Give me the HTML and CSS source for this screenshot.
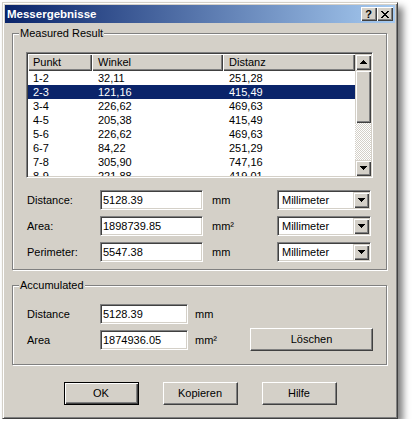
FILE: index.html
```html
<!DOCTYPE html>
<html>
<head>
<meta charset="utf-8">
<link rel="stylesheet" href="styles.css">
</head>
<body>
<div class="dialog">
  <div class="titlebar">
    <span class="title">Messergebnisse</span>
    <div class="cbtns">
      <span class="cbtn help">?</span>
      <span class="cbtn close"><svg width="8" height="7" viewBox="0 0 8 7"><path d="M0 0h2v1h1v1h2v-1h1v-1h2v1h-1v1h-1v1h-1v1h1v1h1v1h1v1h-2v-1h-1v-1h-2v1h-1v1h-2v-1h1v-1h1v-1h1v-1h-1v-1h-1v-1h-1z" fill="#000"/></svg></span>
    </div>
  </div>
  <div class="content">
    <div class="group g1">
      <span class="legend">Measured Result</span>
      <div class="list">
        <div class="list-main">
          <div class="lv-header">
            <div class="hcell c1">Punkt</div>
            <div class="hcell c2">Winkel</div>
            <div class="hcell c3">Distanz</div>
          </div>
          <div class="lv-rows">
            <div class="row"><span class="c1">1-2</span><span class="c2">32,11</span><span class="c3">251,28</span></div>
            <div class="row sel"><span class="c1">2-3</span><span class="c2">121,16</span><span class="c3">415,49</span></div>
            <div class="row"><span class="c1">3-4</span><span class="c2">226,62</span><span class="c3">469,63</span></div>
            <div class="row"><span class="c1">4-5</span><span class="c2">205,38</span><span class="c3">415,49</span></div>
            <div class="row"><span class="c1">5-6</span><span class="c2">226,62</span><span class="c3">469,63</span></div>
            <div class="row"><span class="c1">6-7</span><span class="c2">84,22</span><span class="c3">251,29</span></div>
            <div class="row"><span class="c1">7-8</span><span class="c2">305,90</span><span class="c3">747,16</span></div>
            <div class="row"><span class="c1">8-9</span><span class="c2">221,88</span><span class="c3">419,01</span></div>
          </div>
        </div>
        <div class="vscroll">
          <div class="sbtn"><svg width="7" height="4" viewBox="0 0 7 4"><path d="M3 0h1v1H3zM2 1h3v1H2zM1 2h5v1H1zM0 3h7v1H0z" fill="#000"/></svg></div>
          <div class="thumb"></div>
          <div class="track"></div>
          <div class="sbtn"><svg width="7" height="4" viewBox="0 0 7 4"><path d="M0 0h7v1H0zM1 1h5v1H1zM2 2h3v1H2zM3 3h1v1H3z" fill="#000"/></svg></div>
        </div>
      </div>
      <div class="fields">
        <div class="frow">
          <span class="lbl">Distance:</span>
          <span class="edit e1">5128.39</span>
          <span class="unit u1">mm</span>
          <span class="combo"><span class="ctext">Millimeter</span><span class="dbtn"><svg width="7" height="4" viewBox="0 0 7 4"><path d="M0 0h7v1H0zM1 1h5v1H1zM2 2h3v1H2zM3 3h1v1H3z" fill="#000"/></svg></span></span>
        </div>
        <div class="frow">
          <span class="lbl">Area:</span>
          <span class="edit e1">1898739.85</span>
          <span class="unit u1">mm²</span>
          <span class="combo"><span class="ctext">Millimeter</span><span class="dbtn"><svg width="7" height="4" viewBox="0 0 7 4"><path d="M0 0h7v1H0zM1 1h5v1H1zM2 2h3v1H2zM3 3h1v1H3z" fill="#000"/></svg></span></span>
        </div>
        <div class="frow">
          <span class="lbl">Perimeter:</span>
          <span class="edit e1">5547.38</span>
          <span class="unit u1">mm</span>
          <span class="combo"><span class="ctext">Millimeter</span><span class="dbtn"><svg width="7" height="4" viewBox="0 0 7 4"><path d="M0 0h7v1H0zM1 1h5v1H1zM2 2h3v1H2zM3 3h1v1H3z" fill="#000"/></svg></span></span>
        </div>
      </div>
    </div>
    <div class="group g2">
      <span class="legend">Accumulated</span>
      <div class="frow r1">
        <span class="lbl">Distance</span>
        <span class="edit e2">5128.39</span>
        <span class="unit u2">mm</span>
      </div>
      <div class="frow r2">
        <span class="lbl">Area</span>
        <span class="edit e2">1874936.05</span>
        <span class="unit u2">mm²</span>
        <span class="btn wide">Löschen</span>
      </div>
    </div>
    <div class="buttons">
      <span class="btn def">OK</span>
      <span class="btn">Kopieren</span>
      <span class="btn">Hilfe</span>
    </div>
  </div>
</div>
</body>
</html>
```
FILE: styles.css
```css
* { box-sizing: border-box; }
html, body { margin: 0; padding: 0; background: #fff; }
body {
  font-family: "Liberation Sans", Arial, sans-serif;
  font-size: 11px;
  color: #000;
}
.dialog {
  margin: 2px 0 0 2px;
  width: 396px;
  height: 417px;
  background: #d4d0c8;
  border: 1px solid;
  border-color: #d4d0c8 #404040 #404040 #d4d0c8;
  box-shadow: inset 1px 1px #fff, inset -1px -1px #808080, 5px 5px 7px rgba(0,0,0,0.5);
  padding: 2px;
  display: flex;
  flex-direction: column;
}
.titlebar {
  height: 18px;
  flex: none;
  background: linear-gradient(to right, #0a246a, #a6caf0);
  display: flex;
  align-items: center;
  padding: 0 2px;
}
.title {
  flex: 1;
  color: #fff;
  font-weight: bold;
  font-size: 11.5px;
  line-height: 18px;
}
.cbtns { display: flex; }
.cbtn {
  width: 16px;
  height: 14px;
  background: #d4d0c8;
  box-shadow: inset 1px 1px #fff, inset -1px -1px #404040, inset -2px -2px #808080;
  display: flex;
  align-items: center;
  justify-content: center;
}
.help {
  font-weight: bold;
  font-size: 11px;
  line-height: 14px;
  padding-right: 1px;
}
.close svg { display: block; margin-right: 1px; }
.content {
  display: flex;
  flex-direction: column;
  padding: 10px 0 0 7px;
}
.group {
  position: relative;
  width: 375px;
  border: 1px solid #808080;
  box-shadow: 1px 1px 0 #fff, inset 1px 1px 0 #fff;
  padding-left: 13px;
  padding-top: 18px;
}
.g1 { height: 237px; }
.g2 { height: 80px; margin-top: 15px; }
.legend {
  position: absolute;
  top: -7px;
  left: 6px;
  padding: 0 1px;
  background: #d4d0c8;
  line-height: 13px;
}
.list {
  width: 347px;
  height: 126px;
  border: 1px solid;
  border-color: #808080 #fff #fff #808080;
  box-shadow: inset 1px 1px #404040, inset -1px -1px #d4d0c8;
  padding: 1px;
  background: #fff;
  display: flex;
}
.list-main { width: 327px; display: flex; flex-direction: column; }
.lv-header { display: flex; height: 17px; flex: none; }
.hcell {
  background: #d4d0c8;
  line-height: 17px;
  padding-left: 6px;
  box-shadow: inset 1px 1px #fff, inset -1px -1px #404040, inset -2px -2px #808080;
}
.c1 { width: 64px; padding-left: 5px; }
.c2 { width: 131px; padding-left: 6px; }
.c3 { width: 132px; padding-left: 6px; }
.lv-rows { height: 105px; overflow: hidden; }
.row { display: flex; height: 14px; line-height: 14px; }
.row span { display: block; }
.row.sel { background: #0a246a; color: #fff; }
.vscroll { width: 16px; display: flex; flex-direction: column; }
.sbtn, .thumb, .dbtn {
  background: #d4d0c8;
  box-shadow: inset 1px 1px #d4d0c8, inset 2px 2px #fff, inset -1px -1px #404040, inset -2px -2px #808080;
}
.sbtn {
  height: 16px;
  display: flex;
  align-items: center;
  justify-content: center;
}
.sbtn svg, .dbtn svg { display: block; }
.thumb { height: 53px; }
.track {
  flex: 1;
  background: repeating-conic-gradient(#fff 0 25%, #d4d0c8 0 50%) 0 0 / 2px 2px;
}
.fields {
  margin-top: 12px;
  padding-left: 1px;
  display: flex;
  flex-direction: column;
  gap: 6px;
}
.frow { display: flex; align-items: center; height: 20px; }
.lbl { width: 73px; }
.g2 .frow { padding-left: 1px; }
.g2 .r2 { height: 23px; margin-top: 4px; }
.edit {
  height: 20px;
  background: #fff;
  border: 1px solid;
  border-color: #808080 #fff #fff #808080;
  box-shadow: inset 1px 1px #404040, inset -1px -1px #d4d0c8;
  padding-left: 2px;
  line-height: 18px;
}
.e1 { width: 103px; }
.e2 { width: 88px; }
.u1 { width: 65px; margin-left: 9px; }
.u2 { width: 55px; margin-left: 7px; }
.combo {
  width: 94px;
  height: 20px;
  background: #fff;
  border: 1px solid;
  border-color: #808080 #fff #fff #808080;
  box-shadow: inset 1px 1px #404040, inset -1px -1px #d4d0c8;
  padding: 1px;
  display: flex;
}
.ctext { flex: 1; padding-left: 3px; line-height: 16px; }
.dbtn {
  width: 16px;
  height: 16px;
  display: flex;
  align-items: center;
  justify-content: center;
}
.btn {
  width: 75px;
  height: 23px;
  background: #d4d0c8;
  border: 1px solid;
  border-color: #fff #404040 #404040 #fff;
  box-shadow: inset -1px -1px #808080;
  text-align: center;
  line-height: 21px;
}
.btn.wide { width: 123px; }
.btn.def {
  border-color: #000;
  box-shadow: inset 1px 1px #fff, inset -1px -1px #404040, inset -2px -2px #808080;
}
.buttons {
  margin-top: 17px;
  display: flex;
  justify-content: center;
  gap: 24px;
  padding-right: 7px;
}
```
